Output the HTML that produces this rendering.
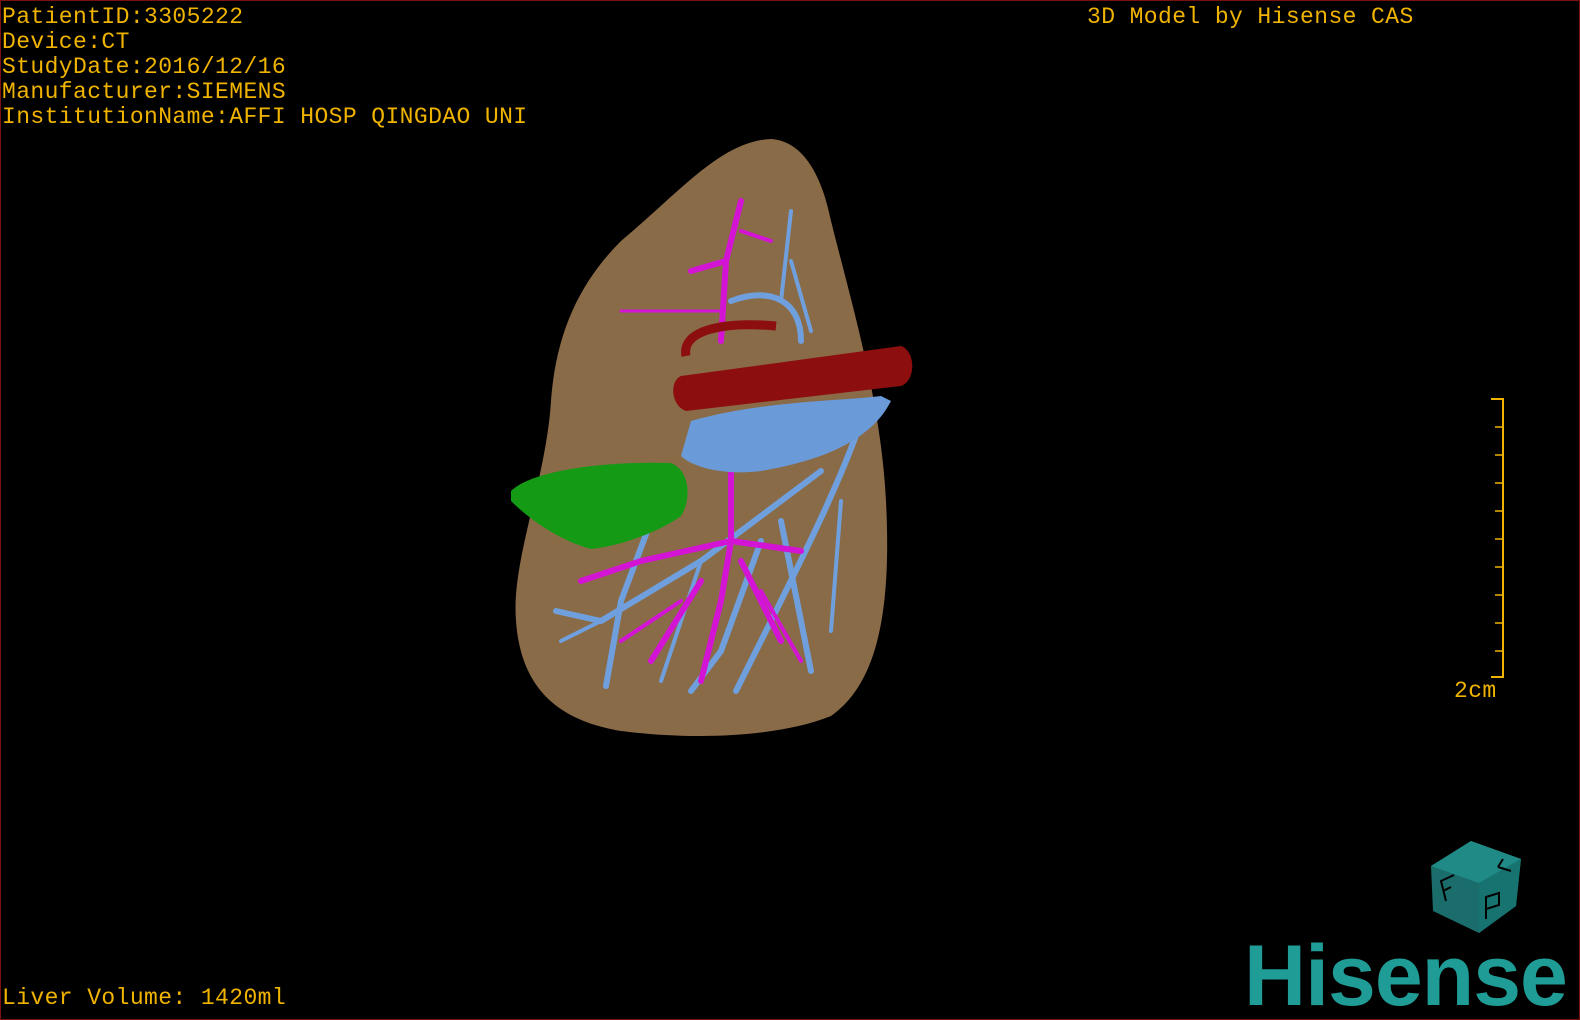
<!DOCTYPE html>
<html><head><style>
html,body{margin:0;padding:0;background:#000;}
#s{position:relative;width:1580px;height:1020px;background:#000;overflow:hidden;box-sizing:border-box;border:1px solid #7a1010;}
.t{position:absolute;color:#f0b400;font-family:"Liberation Mono",monospace;font-size:23px;line-height:25px;white-space:pre;letter-spacing:0.4px;}
.logo{position:absolute;left:1243px;top:932px;color:#1f9c96;font-family:"Liberation Sans",sans-serif;font-weight:bold;font-size:86px;letter-spacing:-1px;line-height:86px;}
</style></head><body><div id="s">
<div class="t" style="left:1px;top:4px">PatientID:3305222
Device:CT
StudyDate:2016/12/16
Manufacturer:SIEMENS
InstitutionName:AFFI HOSP QINGDAO UNI</div>
<div class="t" style="left:1086px;top:4px">3D Model by Hisense CAS</div>
<div class="t" style="left:1px;top:985px">Liver Volume: 1420ml</div>
<div class="t" style="left:1453px;top:678px">2cm</div>
<svg width="1580" height="1020" style="position:absolute;left:0;top:0">
<path d="M1490 398 H1502 V676 H1490" fill="none" stroke="#f0b400" stroke-width="2"/>
<g stroke="#f0b400" stroke-width="1.5">
<line x1="1494" y1="426" x2="1502" y2="426"/><line x1="1494" y1="454" x2="1502" y2="454"/><line x1="1494" y1="482" x2="1502" y2="482"/><line x1="1494" y1="510" x2="1502" y2="510"/><line x1="1494" y1="538" x2="1502" y2="538"/><line x1="1494" y1="566" x2="1502" y2="566"/><line x1="1494" y1="594" x2="1502" y2="594"/><line x1="1494" y1="622" x2="1502" y2="622"/><line x1="1494" y1="650" x2="1502" y2="650"/>
</g>
<path d="M770 138 C800 140 820 170 830 220 C850 300 880 400 885 500 C890 600 880 680 830 715 C780 735 700 740 620 730 C560 720 520 690 515 620 C510 560 545 480 550 400 C555 330 580 280 620 240 C680 190 720 140 770 138 Z" fill="#8a6b48"/>
<g fill="none" stroke="#6fa0dd" stroke-width="6" stroke-linecap="round">
<path d="M730 300 C770 285 800 300 800 340"/>
<path d="M860 420 C840 480 800 560 760 640 L735 690"/>
<path d="M820 470 L700 560 L600 620 L555 610"/>
<path d="M760 540 L720 650 L690 690"/>
<path d="M780 520 L800 620 L810 670"/>
<path d="M650 520 L620 600 L605 685"/>
<path d="M790 210 L780 300" stroke-width="4"/>
<path d="M840 500 L830 630" stroke-width="4"/>
<path d="M700 560 L660 680" stroke-width="4"/>
<path d="M600 620 L560 640" stroke-width="4"/>
<path d="M790 260 L810 330" stroke-width="4"/>
</g>
<g fill="none" stroke="#d414d4" stroke-width="6" stroke-linecap="round">
<path d="M720 340 L725 260 L740 200"/>
<path d="M730 460 L730 540 L720 600 L700 680"/>
<path d="M730 540 L800 550"/><path d="M730 540 L640 560 L580 580"/>
<path d="M740 560 L780 640"/><path d="M700 580 L650 660"/>
<path d="M725 260 L690 270"/><path d="M720 310 L620 310" stroke-width="3"/>
<path d="M740 230 L770 240" stroke-width="4"/>
<path d="M760 590 L800 660" stroke-width="4"/>
<path d="M680 600 L620 640" stroke-width="4"/>
</g>
<path d="M690 420 C760 400 840 400 880 395 L890 400 C870 440 820 460 760 470 C720 475 690 465 680 455 Z" fill="#6a9ad8"/>
<path d="M680 375 L900 345 C915 350 915 380 900 385 L685 410 C670 405 668 380 680 375Z" fill="#8c0e0e"/>
<path d="M685 355 C680 330 720 320 775 325" fill="none" stroke="#8c0e0e" stroke-width="9"/>
<path d="M510 490 C530 470 600 460 670 462 C690 470 690 500 680 515 C660 530 620 545 590 548 C560 540 530 520 510 500Z" fill="#159a15"/>
<path d="M1430 865 L1470 840 L1520 858 L1515 905 L1478 932 L1432 910 Z" fill="#1a6d6a"/>
<path d="M1430 865 L1470 840 L1520 858 L1478 882 Z" fill="#1f8a86"/>
<path d="M1478 882 L1520 858 L1515 905 L1478 932Z" fill="#177370"/>
<g stroke="#000" stroke-width="2" fill="none"><path d="M1445 900 L1440 880 L1453 874 M1442 890 L1450 886"/><path d="M1485 918 L1485 896 L1498 892 L1498 904 L1485 908"/><path d="M1497 866 L1502 858 M1497 866 L1510 870"/></g>
</svg>
<div class="logo">Hisense</div>
</div></body></html>
